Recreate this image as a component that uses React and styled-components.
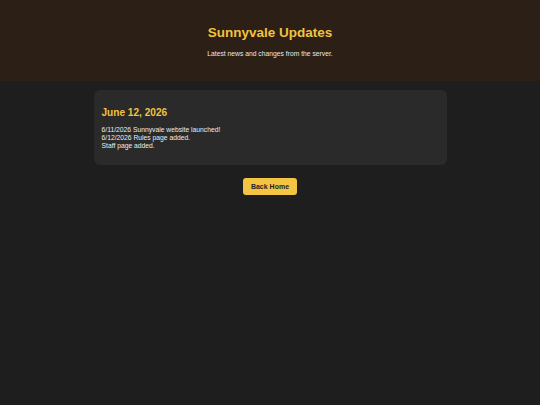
import React from "react";
import styled, { createGlobalStyle } from "styled-components";

const GlobalStyle = createGlobalStyle`
  html, body {
    margin: 0;
    padding: 0;
    background: #1e1e1e;
    font-family: "Liberation Sans", Arial, sans-serif;
    color: #e6e6e6;
  }
  body {
    min-height: 405px;
  }
`;

const Header = styled.header`
  background: #2c1f15;
  text-align: center;
  padding: 25px 0 23px;

  h1 {
    margin: 0;
    font-size: 13.5px;
    line-height: 16px;
    font-weight: 700;
    color: #f2c23f;
  }
  p {
    margin: 9px 0 0;
    font-size: 6.75px;
    line-height: 8px;
    color: #e8e8e8;
  }
`;

const Main = styled.main`
  display: flex;
  flex-direction: column;
  align-items: center;
  padding-top: 9px;
`;

const Card = styled.section`
  box-sizing: border-box;
  width: 353px;
  background: #2a2a2a;
  border-radius: 6px;
  padding: 17px 8px 15px;

  h2 {
    margin: 0 0 7px;
    font-size: 10.1px;
    line-height: 12px;
    font-weight: 700;
    color: #f2c23f;
  }
`;

const Line = styled.div`
  font-size: 6.75px;
  line-height: 8px;
  color: #ececec;
`;

const Button = styled.a`
  display: flex;
  align-items: center;
  justify-content: center;
  margin-top: 13px;
  width: 54px;
  height: 17px;
  border-radius: 3px;
  background: #f4c542;
  color: #1e1e1e;
  font-size: 7px;
  font-weight: 700;
  text-decoration: none;
  cursor: pointer;
`;

const updates = [
  "6/11/2026 Sunnyvale website launched!",
  "6/12/2026 Rules page added.",
  "Staff page added.",
];

const App = () => {
  return (
    <>
      <GlobalStyle />
      <Header>
        <h1>Sunnyvale Updates</h1>
        <p>Latest news and changes from the server.</p>
      </Header>
      <Main>
        <Card>
          <h2>June 12, 2026</h2>
          {updates.map((u) => (
            <Line key={u}>{u}</Line>
          ))}
        </Card>
        <Button href="#">Back Home</Button>
      </Main>
    </>
  );
};

export default App;
